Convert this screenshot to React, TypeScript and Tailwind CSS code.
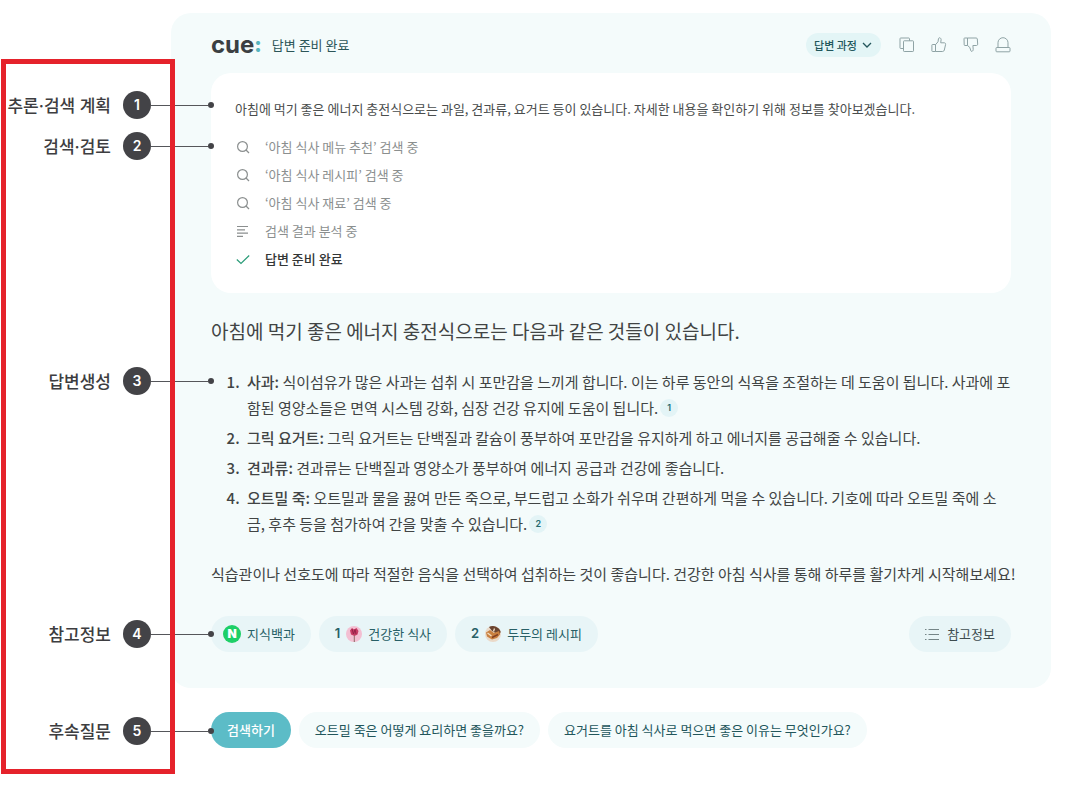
import type { ReactNode } from 'react';
import clsx from 'clsx';

const followUps = ['오트밀 죽은 어떻게 요리하면 좋을까요?', '요거트를 아침 식사로 먹으면 좋은 이유는 무엇인가요?'];

const steps = [
  { icon: 'search', text: '‘아침 식사 메뉴 추천’ 검색 중' },
  { icon: 'search', text: '‘아침 식사 레시피’ 검색 중' },
  { icon: 'search', text: '‘아침 식사 재료’ 검색 중' },
  { icon: 'lines', text: '검색 결과 분석 중' },
  { icon: 'check', text: '답변 준비 완료' },
];

const actions = [
  {
    label: '복사',
    shape: (
      <>
        <path d="M4.5 11.5H1.7a.7.7 0 0 1-.7-.7V1.7a.7.7 0 0 1 .7-.7h8.1a.7.7 0 0 1 .7.7v2.1" />
        <rect x="4.5" y="3.8" width="10" height="10.7" rx=".7" />
      </>
    ),
  },
  {
    label: '좋아요',
    shape: (
      <>
        <path d="M1.5 7.5h3v7h-3a.6.6 0 0 1-.6-.6V8.1a.6.6 0 0 1 .6-.6Z" />
        <path d="M4.5 7.7 7 4.8l.5-3.2c.1-.6.7-1 1.3-.8.9.3 1.4 1.1 1.3 2L9.7 5.8h3.6c.9 0 1.5.8 1.3 1.6l-1.3 5.7c-.2.8-.8 1.4-1.7 1.4H4.5" />
      </>
    ),
  },
  {
    label: '싫어요',
    shape: (
      <>
        <path d="M1.7 1h2.8v7.5H1.9a.7.7 0 0 1-.7-.7L1 1.7A.7.7 0 0 1 1.7 1Z" />
        <path d="M4.5 1h8.7c.6 0 1 .4 1.1.9l.4 5.3c0 .7-.5 1.3-1.2 1.3H9.9l.3 3.8c.1.9-.4 1.7-1.2 2.1-.4.2-.8 0-1-.4L6.7 10.3 4.5 8.5" />
      </>
    ),
  },
  {
    label: '알림',
    shape: (
      <>
        <path d="M3 10.5V5.7a5 5 0 0 1 10 0v4.8" />
        <rect x="1" y="10.5" width="14" height="4.3" rx=".8" />
      </>
    ),
  },
];

function StepIcon({ name }: { name: string }) {
  return (
    <svg
      className={clsx('h-4 w-4 shrink-0', name === 'check' ? 'text-[#2a9c78]' : 'text-[#8b8f8f]')}
      viewBox="0 0 16 16"
      fill="none"
      stroke="currentColor"
      strokeWidth="1.2"
      aria-hidden="true"
    >
      {name === 'search' && (
        <>
          <circle cx="7.5" cy="7.5" r="4.9" />
          <path d="m11 11 3 3" />
        </>
      )}
      {name === 'lines' && <path d="M2 3.5h11M2 6.8h8M2 10.1h11M2 13.4h6" />}
      {name === 'check' && <path d="m1.8 8.5 4.2 4 8.2-8" />}
    </svg>
  );
}

function Callout({ no, label, className }: { no: number; label: string; className: string }) {
  return (
    <div className={clsx("absolute right-full -mr-[3px] flex h-7 items-center font-[Inter,'Noto_Sans_CJK_KR',sans-serif] whitespace-nowrap", className)}>
      <span className="mr-3 pt-[3px] text-[17px] font-medium text-[#3d3d40]">{label}</span>
      <span className="flex h-7 w-7 items-center justify-center rounded-full bg-[#434347] text-sm font-semibold text-white">{no}</span>
      <span className="h-px w-[57px] bg-[#55565a]" />
      <span className="h-[6px] w-[6px] rounded-full bg-[#434347]" />
    </div>
  );
}

function Cite({ no }: { no: number }) {
  return (
    <a href={`#ref-${no}`} className="mb-[3px] ml-[2px] inline-flex h-[18px] w-[18px] items-center justify-center rounded-full bg-[#e3f4f6] align-middle font-[Inter] text-[9px] font-semibold text-[#22696f]">
      {no}
    </a>
  );
}

function SourceLink({ id, no, icon, children }: { id: string; no?: number; icon: ReactNode; children: ReactNode }) {
  return (
    <a id={id} href={`#${id}`} className={clsx('flex h-9 items-center rounded-full bg-[#e8f5f7] pr-4 text-[13px] text-[#275f66]', no ? 'pl-4' : 'pl-3')}>
      {no && <span className="mr-[6px] font-[Inter] font-semibold">{no}</span>}
      {icon}
      <span className="ml-[6px]">{children}</span>
    </a>
  );
}

export default function App() {
  return (
    <main className="relative bg-white pt-[13px] pr-[15px] pb-14 pl-[171px] font-['Noto_Sans_CJK_KR',sans-serif] text-[#414444]">
      <section className="rounded-[20px] bg-[#f4fbfb] px-10 pt-5 pb-9">
        <header className="flex h-6 items-center">
          <h1 className="flex items-center font-[Inter] text-2xl leading-6 font-bold text-[#3b3f42]">
            cue<span className="text-xl leading-6 font-black text-[#55b5bf]">:</span>
          </h1>
          <span className="ml-[10px] text-[13px] text-[#2c5558]">답변 준비 완료</span>
          <button className="ml-auto flex h-6 items-center gap-1 rounded-full bg-[#e3f5f6] px-2 text-[11px] font-medium text-[#22565b]">
            답변 과정
            <svg className="h-3 w-3" viewBox="0 0 12 12" fill="none" stroke="currentColor" strokeWidth="1.3" aria-hidden="true">
              <path d="m2 4 4 4 4-4" />
            </svg>
          </button>
          <div className="ml-[18px] flex gap-4">
            {actions.map((a) => (
              <button key={a.label} aria-label={a.label}>
                <svg className="h-4 w-4 text-[#8fa3a5]" viewBox="0 0 16 16" fill="none" stroke="currentColor" strokeWidth="1" strokeLinejoin="round">
                  {a.shape}
                </svg>
              </button>
            ))}
          </div>
        </header>

        <div className="relative mt-4 rounded-[20px] bg-white px-6 pt-6 pb-5 text-[13px]">
          <Callout no={1} label="추론·검색 계획" className="top-[18px]" />
          <Callout no={2} label="검색·검토" className="top-[59px]" />
          <p className="leading-6 text-[#4a4d4d]">아침에 먹기 좋은 에너지 충전식으로는 과일, 견과류, 요거트 등이 있습니다. 자세한 내용을 확인하기 위해 정보를 찾아보겠습니다.</p>
          <ul className="mt-3 leading-7">
            {steps.map((s) => (
              <li key={s.text} className={clsx('flex items-center gap-[14px]', s.icon === 'check' ? 'font-medium text-[#333636]' : 'text-[#8b8f8f]')}>
                <StepIcon name={s.icon} />
                {s.text}
              </li>
            ))}
          </ul>
        </div>

        <h2 className="mt-6 text-[19px] leading-7 whitespace-nowrap">아침에 먹기 좋은 에너지 충전식으로는 다음과 같은 것들이 있습니다.</h2>

        <div className="relative mt-6">
          <Callout no={3} label="답변생성" className="-top-[2px]" />
          <ol className="ml-8 list-outside list-decimal space-y-1 text-[15px] leading-[26px] whitespace-nowrap *:pl-1 marker:font-medium">
            <li>
              <strong className="font-medium">사과:</strong> 식이섬유가 많은 사과는 섭취 시 포만감을 느끼게 합니다. 이는 하루 동안의 식욕을 조절하는 데 도움이 됩니다. 사과에 포
              <br />
              함된 영양소들은 면역 시스템 강화, 심장 건강 유지에 도움이 됩니다.
              <Cite no={1} />
            </li>
            <li>
              <strong className="font-medium">그릭 요거트:</strong> 그릭 요거트는 단백질과 칼슘이 풍부하여 포만감을 유지하게 하고 에너지를 공급해줄 수 있습니다.
            </li>
            <li>
              <strong className="font-medium">견과류:</strong> 견과류는 단백질과 영양소가 풍부하여 에너지 공급과 건강에 좋습니다.
            </li>
            <li>
              <strong className="font-medium">오트밀 죽:</strong> 오트밀과 물을 끓여 만든 죽으로, 부드럽고 소화가 쉬우며 간편하게 먹을 수 있습니다. 기호에 따라 오트밀 죽에 소
              <br />
              금, 후추 등을 첨가하여 간을 맞출 수 있습니다.
              <Cite no={2} />
            </li>
          </ol>
        </div>

        <p className="mt-6 text-[15px] leading-[26px] whitespace-nowrap">식습관이나 선호도에 따라 적절한 음식을 선택하여 섭취하는 것이 좋습니다. 건강한 아침 식사를 통해 하루를 활기차게 시작해보세요!</p>

        <div className="relative mt-[29px] flex gap-2">
          <Callout no={4} label="참고정보" className="top-1" />
          <SourceLink
            id="ref-0"
            icon={
              <span className="flex h-[18px] w-[18px] items-center justify-center rounded-full bg-[#1ecf67] font-[Inter] text-xs font-black text-white">N</span>
            }
          >
            지식백과
          </SourceLink>
          <SourceLink
            id="ref-1"
            no={1}
            icon={
              <svg className="h-4 w-4" viewBox="0 0 16 16" aria-hidden="true">
                <circle cx="8" cy="8" r="8" fill="#f3bfd2" />
                <path d="M4 4.5 6 2l2 1.5L10.5 2l2 3-1 3.5-3 1.5L5 8.5Z" fill="#c73a63" />
                <path d="m6 3 1.5 5L9 3.5l1 4.5" stroke="#8f1f45" strokeWidth=".9" fill="none" />
                <path d="M8.3 9.5V16" stroke="#8d6a66" strokeWidth="1" />
              </svg>
            }
          >
            건강한 식사
          </SourceLink>
          <SourceLink
            id="ref-2"
            no={2}
            icon={
              <svg className="h-4 w-4" viewBox="0 0 16 16" aria-hidden="true">
                <circle cx="8" cy="8" r="8" fill="#ead9c8" />
                <path d="M4 1.1A8 8 0 0 1 15.7 6L14 9 7 5Z" fill="#6b4430" />
                <path d="M1 6.5 5 4l4 3 5-2 1 3.5-3 3.5-5 1.5-5-3Z" fill="#c9803f" />
                <path d="m2.5 7 4 3M9.5 2.5l-1 3" stroke="#f2dfc4" strokeWidth="1.3" />
                <path d="m7 11.5 6-3" stroke="#843f20" strokeWidth="1.4" />
              </svg>
            }
          >
            두두의 레시피
          </SourceLink>
          <button className="ml-auto flex h-9 items-center gap-2 rounded-full bg-[#e8f5f7] px-4 text-[13px] text-[#3e4c4f]">
            <svg className="h-[14px] w-[14px] text-[#758587]" viewBox="0 0 14 14" fill="none" stroke="currentColor" aria-hidden="true">
              <path d="M0 2.5h1.5M3.5 2.5H14M0 7.5h1.5M3.5 7.5H14M0 12.5h1.5M3.5 12.5H14" />
            </svg>
            참고정보
          </button>
        </div>
      </section>

      <div className="relative mx-10 mt-6 flex gap-2 text-[13px]">
        <Callout no={5} label="후속질문" className="top-[5px]" />
        <button className="h-9 rounded-full bg-[#5cbcc7] px-4 font-medium text-white">검색하기</button>
        {followUps.map((q) => (
          <button key={q} className="h-9 rounded-full bg-[#f4fbfb] px-4 text-[#22565b]">
            {q}
          </button>
        ))}
      </div>

      <div className="pointer-events-none absolute top-[59px] bottom-[30px] left-px w-[174px] border-[5px] border-[#e5222b]" />
    </main>
  );
}
